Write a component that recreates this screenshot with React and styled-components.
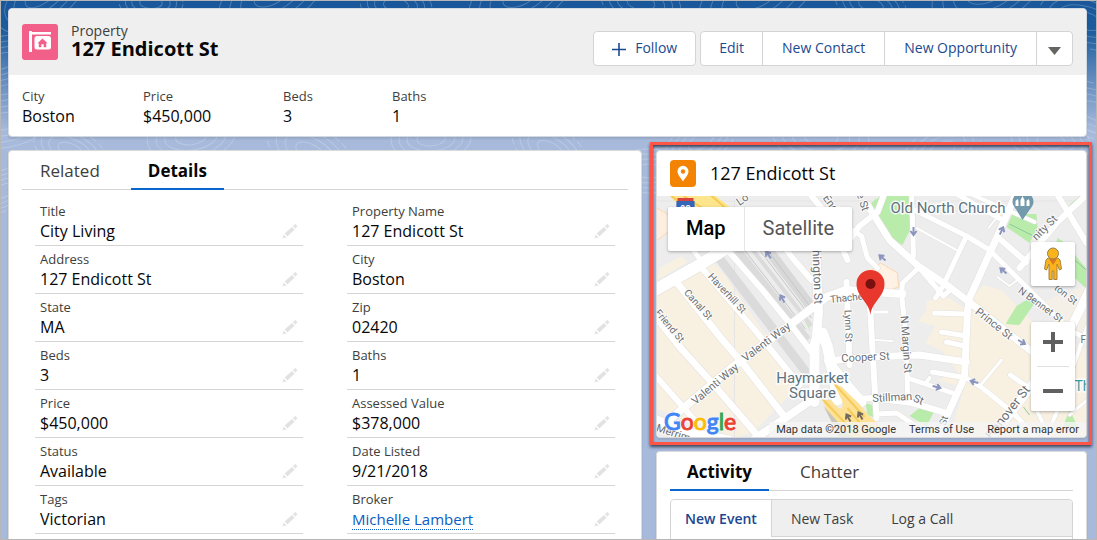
import React from "react";
import styled, { createGlobalStyle, css } from "styled-components";

const GlobalStyle = createGlobalStyle`
  *, *::before, *::after { box-sizing: border-box; }
  body {
    margin: 0;
    font-family: "Open Sans", "Noto Sans", sans-serif;
    font-size: 16px;
    line-height: 20px;
    color: #080707;
  }
  h1, h2, p, dl, dt, dd { margin: 0; font: inherit; }
  button { margin: 0; padding: 0; border: 0; background: none; font: inherit; color: inherit; cursor: pointer; }
`;

const Frame = styled.div`
  position: relative;
  isolation: isolate;
  height: 100vh;
  overflow: hidden;
  border: 1px solid #b7b7b7;
  padding: 7px 9px 0 7px;
  display: flex;
  flex-direction: column;
  gap: 13px;
  background: linear-gradient(#19579a 0, #1c5c9d 30px, #5f89bd 75px, #a7badb 130px);
`;

const Contours = styled.svg`
  position: absolute;
  inset: 0;
  width: 100%;
  height: 100%;
  z-index: -1;
`;

const Card = styled.section`
  position: relative;
  background: #fff;
  border: 1px solid #dddbda;
  border-radius: 4px;
  box-shadow: 0 2px 2px rgba(0, 0, 0, 0.1);
`;

const RecordCard = styled(Card)`
  border-color: #d3d9e3;
  flex: none;
`;

const RecordTop = styled.div`
  display: flex;
  align-items: center;
  gap: 13px;
  height: 66px;
  padding: 0 13px;
  background: #efefef;
  border-radius: 4px 4px 0 0;
`;

const ObjectIcon = styled.svg`
  display: block;
  width: 36px;
  height: 36px;
  flex: none;
`;

const Heading = styled.div`
  flex: 1;
  padding-bottom: 2px;
`;

const ObjectName = styled.p`
  font-size: 14px;
  line-height: 16px;
  color: #3e3e3c;
`;

const RecordName = styled.h1`
  font-size: 20px;
  line-height: 20px;
  font-weight: 700;
`;

const Actions = styled.div`
  display: flex;
  align-self: flex-start;
  gap: 4px;
  padding-top: 22px;
`;

const ButtonGroup = styled.div`
  display: flex;
  border: 1px solid #d4d4d4;
  border-radius: 4px;
  background: #fff;
`;

const ActionButton = styled.button`
  display: flex;
  align-items: center;
  gap: 9px;
  height: 33px;
  padding: 0 18px 2px;
  font-size: 14px;
  color: #1b4a8f;
  & + & { padding: 0 19px 2px; border-left: 1px solid #d4d4d4; }
  ${(p) => p.$icon && css`&& { padding: 2px 11px 0; }`}
`;

const Highlights = styled.dl`
  display: flex;
  padding: 12px 13px 9px;
`;

const Highlight = styled.div`
  width: ${(p) => p.$w}px;
`;

const Label = styled.dt`
  font-size: 13px;
  line-height: 18px;
  color: #3e3e3c;
`;

const Value = styled.dd`
  font-size: ${(p) => (p.$small ? 15 : 16)}px;
  line-height: 22px;
`;

const Columns = styled.main`
  display: grid;
  grid-template-columns: 634fr 431fr;
  column-gap: 14px;
  flex: 1;
`;

const Side = styled.div`
  display: flex;
  flex-direction: column;
  gap: 13px;
  min-width: 0;
`;

const TabBody = styled(Card)`
  padding: 0 13px;
  ${(p) => p.$grow && css`flex: 1; border-bottom: 0;`}
`;

const TabBar = styled.div`
  display: flex;
  gap: 13px;
  height: 39px;
  border-bottom: 1px solid #d4d4d4;
`;

const Tab = styled.button`
  height: 39px;
  padding: 2px 18px 0;
  font-size: 17px;
  color: #3e3e3c;
  border-bottom: 2px solid transparent;
  ${(p) => p.$active && css`
    padding: 2px 17px 0;
    font-weight: 700;
    color: #080707;
    border-color: #0a66cf;
  `}
`;

const FieldGrid = styled.dl`
  display: grid;
  grid-template-columns: 1fr 1fr;
  column-gap: 44px;
  padding: 8px 13px 0;
`;

const Field = styled.div`
  display: grid;
  grid-template-columns: 1fr auto;
  align-content: end;
  height: 48px;
  padding: 0 5px 3px;
  border-bottom: 1px solid #d4d4d4;
  ${Label} { grid-column: 1 / -1; }
`;

const EditButton = styled.button`
  width: 16px;
  height: 22px;
  display: grid;
  place-items: center;
`;

const RecordLink = styled.a`
  color: #0b5cc4;
  text-decoration: none;
  border-bottom: 1px dotted #0b5cc4;
`;

const MapHeader = styled.header`
  display: flex;
  align-items: center;
  gap: 14px;
  height: 45px;
  padding: 0 13px;
`;

const MapTitle = styled.h2`
  padding-bottom: 2px;
  font-size: 18px;
  line-height: 24px;
`;

const MapArea = styled.div`
  position: relative;
  height: 241px;
  overflow: hidden;
  border-radius: 0 0 4px 4px;
  font-family: Roboto, sans-serif;
`;

const MapDrawing = styled.svg`
  display: block;
  width: 100%;
  height: 100%;
`;

const Floating = styled.div`
  position: absolute;
  background: #fff;
  border-radius: 2px;
  box-shadow: 0 1px 3px rgba(0, 0, 0, 0.3);
`;

const MapTypes = styled(Floating)`
  top: 11px;
  left: 11px;
  display: flex;
`;

const MapType = styled.button`
  height: 44px;
  padding: 0 18px 2px;
  font-size: 20px;
  color: #565656;
  & + & { border-left: 1px solid #e6e6e6; }
  ${(p) => p.$active && css`color: #000; font-weight: 500;`}
`;

const Pegman = styled(Floating)`
  top: 46px;
  right: 11px;
`;

const Zoom = styled(Floating)`
  top: 126px;
  right: 11px;
`;

const MapButton = styled.button`
  width: 44px;
  height: 44px;
  display: grid;
  place-items: center;
`;

const ZoomLine = styled.div`
  height: 1px;
  margin: 0 6px;
  background: #e0e0e0;
`;

const GoogleMark = styled.a`
  position: absolute;
  left: 7px;
  bottom: 1px;
  font-family: Lato, sans-serif;
  font-size: 23px;
  line-height: 30px;
  font-weight: 400;
  -webkit-text-stroke: 1px currentColor;
  text-decoration: none;
  text-shadow: 0 0 2px #fff, 0 0 2px #fff, 0 0 3px #fff;
`;

const Letter = styled.span`
  color: ${(p) => p.$c};
`;

const MapLegal = styled.div`
  position: absolute;
  right: 0;
  bottom: 0;
  display: flex;
  gap: 13px;
  padding: 0 7px;
  font-size: 11px;
  line-height: 15px;
  color: #333;
  background: rgba(245, 245, 245, 0.8);
  a { color: inherit; text-decoration: none; }
`;

const Callout = styled.div`
  position: absolute;
  inset: -9px -6px -8px -7px;
  border: 3px solid #fd5547;
  box-shadow: 0 2px 3px rgba(20, 30, 50, 0.75), inset 0 2px 3px rgba(20, 30, 50, 0.75);
  pointer-events: none;
`;

const Composer = styled.div`
  display: flex;
  margin-top: 8px;
  height: 60px;
  border: 1px solid #d4d4d4;
  border-radius: 4px;
`;

const ComposerTabs = styled.div`
  flex: 1;
  display: flex;
  height: 37px;
  background: #efefef;
  border-bottom: 1px solid #d4d4d4;
  border-radius: 4px 4px 0 0;
`;

const ComposerTab = styled.button`
  height: 37px;
  padding: 0 19px;
  font-size: 14px;
  color: #3e3e3c;
  ${(p) => p.$active && css`
    padding: 0 14px;
    font-weight: 600;
    color: #1b468f;
    background: #fff;
    border-right: 1px solid #d4d4d4;
    border-radius: 4px 0 0 0;
  `}
`;

const swirls = [
  [40, -6, 26], [150, 2, 16], [272, -8, 30], [395, 4, 18], [520, -6, 28], [640, 2, 20],
  [755, -4, 30], [870, 4, 18], [985, -8, 28], [1085, 20, 24], [1, 60, 22], [1094, 110, 24],
  [4, 120, 24], [70, 150, 20], [190, 136, 22], [310, 152, 24], [430, 138, 20], [550, 150, 22],
  [648, 170, 20], [700, 140, 20], [820, 136, 24], [940, 150, 22], [1050, 140, 20], [2, 190, 18],
];

function Background() {
  return (
    <Contours aria-hidden="true" fill="none" stroke="#fff" strokeOpacity="0.22">
      {swirls.map(([x, y, r], i) => (
        <g key={i} transform={`translate(${x} ${y}) rotate(${(i * 37) % 70 - 35})`}>
          <ellipse rx={r * 2} ry={r * 1.1} strokeDasharray={i % 2 ? "7 3" : undefined} />
          <ellipse rx={r * 1.6} ry={r * 0.85} />
          <ellipse rx={r * 1.2} ry={r * 0.6} />
          <ellipse rx={r * 0.7} ry={r * 0.35} />
        </g>
      ))}
    </Contours>
  );
}

const Pencil = () => (
  <svg width="16" height="16" viewBox="0 0 16 16" fill="#e4e2e0" aria-hidden="true">
    <path d="M.500 15.500l1-4 3 3zM2.600 10.400l7.400-6.400 2.600 2.600-7.200 6.800zM11 3l1.400-1.500q.9-.7 1.800.2l.5.5q.9.9.1 1.800L13.400 5.500z" />
  </svg>
);

const roads = [
  [12, "645,296 700,265 735,243"],
  [7, "677,282 723,340 743,363 786,418"],
  [5, "690,245 704,264"],
  [6, "704,270 757,332 800,385"],
  [7, "650,309 682,349 710,380 762,440"],
  [6, "650,369 695,420"],
  [8, "672,418 733,367 793,323 827,297 846,290 903,294"],
  [6, "728,250 763,290 790,323 812,352"],
  [6, "778,238 793,258 812,280"],
  [9, "816,240 819,313 817,335"],
  [10, "819,333 815,345 815,402"],
  [11, "823,333 828,347 834,375 838,400"],
  [10, "831,365 845,382 862,402"],
  [9, "650,417 690,433 730,440"],
  [8, "745,446 815,398"],
  [6, "812,196 828,215 848,260"],
  [6, "850,240 860,226 878,212 884,196"],
  [5, "846,226 862,236 868,258 878,268"],
  [6, "847,282 850,365"],
  [7, "868,205 890,240 920,267 950,287 980,310 1034,353"],
  [5, "912,190 914,256"],
  [5, "915,210 967,236 990,250 1010,270 1070,330 1090,340"],
  [2, "917,228 957,250"],
  [5, "967,236 943,287 936,298"],
  [7, "1018,190 1007,216 970,298 968,310 965,377 947,417 938,440"],
  [5, "950,190 1003,220"],
  [4, "962,190 1035,222"],
  [6, "998,237 1027,262"],
  [6, "1020,268 1058,222 1090,192"],
  [6, "1055,190 1087,243"],
  [2, "998,277 1010,286 1018,280"],
  [2, "1000,214 989,228"],
  [5, "920,267 903,283 902,294 907,340 908,398"],
  [5, "920,268 944,296 953,288"],
  [5, "935,313 966,314"],
  [5, "942,332 967,336"],
  [5, "947,342 965,346"],
  [7, "828,361 870,357 920,355 967,362"],
  [6, "870,296 873,350 877,418"],
  [3, "872,312 888,312"],
  [2, "876,340 893,341"],
  [5, "908,378 953,393"],
  [4, "926,384 930,378"],
  [5, "933,372 967,378 983,388 1015,414 1035,437"],
  [3, "982,384 1002,360"],
  [5, "1011,375 1035,392"],
  [6, "858,399 873,398 913,403 947,413"],
  [5, "877,414 897,413 915,425"],
  [9, "985,446 1015,408 1040,375 1068,335 1090,290"],
  [4, "1038,412 1050,437"],
  [4, "1046,440 1062,400 1090,320"],
  [3, "1070,415 1090,398"],
];

const labels = [
  ["Haverhill St", 708, 277, 47, 10],
  ["Canal St", 684, 293, 48, 10],
  ["Friend St", 655, 313, 50, 10],
  ["Valenti Way", 746, 362, -37, 11],
  ["Valenti Way", 696, 405, -40, 11],
  ["hington St", 813, 250, 88, 12],
  ["Thacher", 831, 303, -6, 10],
  ["Lynn St", 845, 310, 88, 10],
  ["Cooper St", 842, 362, -3, 11],
  ["N Margin St", 901, 316, 86, 11],
  ["Stillman", 873, 402, -3, 11],
  ["St", 913, 401, 22, 11],
  ["Prince St", 975, 313, 38, 11],
  ["N Bennet St", 1018, 292, 36, 10],
  ["ton St", 1054, 289, 38, 10],
  ["nity St", 1037, 241, -45, 11],
  ["Hanover St", 992, 440, -52, 13],
  ["St", 946, 426, -72, 10],
  ["Merrimac", 656, 431, 18, 11],
  ["End", 823, 198, 55, 11],
  ["e St", 857, 194, 72, 11],
  ["Lo", 740, 206, -35, 11],
  ["F", 1081, 343, 0, 10],
];

const arrows = [
  [769, 255, -35], [783, 299, -30], [914, 231, 180], [883, 258, -50], [1002, 231, 25],
  [1004, 271, -50], [1022, 342, 120], [937, 387, 105], [975, 382, -75],
];

function CityMap() {
  return (
    <MapDrawing viewBox="657 196 430 241" preserveAspectRatio="xMidYMid slice" role="img" aria-label="Map of 127 Endicott St">
      <rect x="400" y="0" width="1000" height="600" fill="#eeeded" />
      <g fill="#f8f1e2">
        <path d="M657 297L710 258 725 275 800 385 752 434 735 437 680 417 657 409z" />
        <path d="M660 268l22-12 6 6-30 18z" />
        <path d="M970 298l14-13 18 5 35 36 50 24v87H950l15-50z" />
        <path d="M927 301l20-5 18 12v80l-27-8 20-8-14-20-18-9 10-17-18-5 9-10z" />
        <path d="M1035 305l52 30v-50z" opacity=".6" />
      </g>
      <path d="M735 196v241M657 201h430" stroke="#e6e5e5" />
      <path d="M650 204l18 10 6 14-16 12-8 4z" fill="#feeee0" stroke="#fbd6b2" />
      <path d="M872 270l9-7 17 10 1 14-20 7z" fill="#fff1e3" stroke="#fbd6b2" />
      <g fill="#b9ebab">
        <path d="M872 204l11-10h29v33l-9 18-15-8z" />
        <path d="M1013 214h24l1 14-8 15-23-16z" />
        <path d="M1058 238l8 5 21 26v20l-34-32z" />
        <path d="M1070 205l17-15v8l-12 10z" />
        <path d="M1006 324l11-18 10-6 9 2-16 23z" />
        <path d="M910 416l10-8 15 3-8 15z" />
        <path d="M1062 430l8-20 10 20z" />
        <path d="M803 316l4 2 4 14z" />
        <path d="M866 403l10 3v12l-8-3z" />
        <path d="M871 204l6-6v14z" />
      </g>
      <g stroke="#dbdbdb" fill="none">
        <path d="M718 256L808 374" strokeWidth="9" />
        <path d="M738 250L808 340" strokeWidth="8" />
        <path d="M751 247L812 326" strokeWidth="4" />
        <path d="M765 245L814 310" strokeWidth="10" stroke="#d8d8d8" />
        <path d="M764 245L814 311M745 250L806 329M757 246L812 318" strokeWidth="1" stroke="#c6c6c6" />
      </g>
      <g fill="none" stroke="#e2e0dd" strokeLinecap="round" strokeLinejoin="round">
        {roads.map(([w, pts], i) => <polyline key={i} points={pts} strokeWidth={w + 1} />)}
      </g>
      <g fill="none" stroke="#fff" strokeLinecap="round" strokeLinejoin="round">
        {roads.map(([w, pts], i) => <polyline key={i} points={pts} strokeWidth={w} />)}
      </g>
      <path d="M664 190L688 214 724 236 740 214 708 190z" fill="#fde58d" />
      <path d="M672 196l20 16M684 196l22 14M710 194l16 14" stroke="#f6ca56" strokeWidth="2" />
      <path d="M823 400l8 0 8 8q5 2 4-6l-9-19 8 4 18 17 8 10 12 12 6 14h-46z" fill="#fde194" />
      <path d="M835 384l30 33M823 399l34 36M848 408l24 29" stroke="#f6cb5c" strokeWidth="2" fill="none" />
      <path d="M824 406l28 31h-12z" fill="#c9c5bb" />
      <path d="M1010 224l24 12M1056 244l31 26M1030 415l-6-8" stroke="#8fc79f" fill="none" />
      <g fill="none" stroke="#73695a" strokeWidth="2">
        <path d="M0 4V-3M-3 0L0-4 3 0" transform="translate(849 418) rotate(-30)" />
        <path d="M0 4V-3M-3 0L0-4 3 0" transform="translate(861 416) rotate(-30)" />
      </g>
      <path d="M678 198h16v3h-16z" fill="#d9413d" />
      <path d="M677 201h18q2 10-9 17-11-7-9-17z" fill="#3566b8" />
      <text x="686" y="212" fontSize="9" fontWeight="700" fill="#fff" textAnchor="middle">93</text>
      <g fill="none" stroke="#8b95bd" strokeWidth="2">
        {arrows.map(([x, y, a], i) => (
          <path key={i} d="M0 4V-3M-3 0L0-4 3 0" transform={`translate(${x} ${y}) rotate(${a})`} />
        ))}
      </g>
      <g fill="#6c7074" stroke="#fff" strokeWidth="2" paintOrder="stroke" strokeOpacity=".8">
        {labels.map(([t, x, y, a, s], i) => (
          <text key={i} fontSize={s} transform={`translate(${x} ${y}) rotate(${a})`}>{t}</text>
        ))}
      </g>
      <g fill="#5d7380" stroke="#fff" strokeWidth="3" paintOrder="stroke" strokeOpacity=".85">
        <text x="891" y="213" fontSize="15">Old North Church</text>
        <text x="813" y="383" fontSize="15" textAnchor="middle">Haymarket</text>
        <text x="813" y="398" fontSize="15" textAnchor="middle">Square</text>
        <text x="1075" y="391" fontSize="14" fill="#3f9a9e">Th</text>
      </g>
      <path d="M1023 220l-6-10q-4-5-4-8a10.500 10.500 0 0 1 21 0q0 3-4 8z" fill="#7399ac" />
      <path d="M1016 206v-5l2-2 1 2v5zM1021 206v-6l2-4 2 4v6zM1027 206v-5l2-2 1 2v5z" fill="#fff" />
      <path d="M871 315c-1-13-14-18-14-31a14 14 0 0 1 28 0c0 13-13 18-14 31z" fill="#e8372d" />
      <circle cx="871" cy="284" r="5" fill="#76110f" />
    </MapDrawing>
  );
}

const highlights = [["City", "Boston", 121], ["Price", "$450,000", 140], ["Beds", "3", 109], ["Baths", "1", 100]];

const fields = [
  ["Title", "City Living"], ["Property Name", "127 Endicott St"],
  ["Address", "127 Endicott St"], ["City", "Boston"],
  ["State", "MA"], ["Zip", "02420"],
  ["Beds", "3"], ["Baths", "1"],
  ["Price", "$450,000"], ["Assessed Value", "$378,000"],
  ["Status", "Available"], ["Date Listed", "9/21/2018"],
  ["Tags", "Victorian"], ["Broker", "Michelle Lambert", true],
];

const googleLetters = [["G", "#4285f4"], ["o", "#ea4335"], ["o", "#fbbc05"], ["g", "#4285f4"], ["l", "#34a853"], ["e", "#ea4335"]];

export default function App() {
  return (
    <>
      <GlobalStyle />
      <Frame>
        <Background />
        <RecordCard>
          <RecordTop>
            <ObjectIcon viewBox="0 0 36 36" aria-hidden="true">
              <rect width="36" height="36" rx="3" fill="#f25f88" />
              <path d="M7 7.500q0-.5.500-.5h1.800q.7 0 .7.700V8h19v2.500H10V28H7zM15 12h11.500q2.500 0 2.500 2.500V23q0 2.500-2.500 2.500H15q-2.500 0-2.500-2.500v-8.500Q12.500 12 15 12z" fill="#fff" />
              <path d="M20.500 14.500l5 4.700h-1.300v4h-2.500v-3h-2.400v3h-2.500v-4h-1.300z" fill="#f25f88" />
            </ObjectIcon>
            <Heading>
              <ObjectName>Property</ObjectName>
              <RecordName>127 Endicott St</RecordName>
            </Heading>
            <Actions>
              <ButtonGroup>
                <ActionButton>
                  <svg width="14" height="16" viewBox="0 0 14 16" stroke="#1b4a8f" strokeWidth="1.600" aria-hidden="true">
                    <path d="M7 3v13M0 9.500h14" />
                  </svg>
                  Follow
                </ActionButton>
              </ButtonGroup>
              <ButtonGroup>
                <ActionButton>Edit</ActionButton>
                <ActionButton>New Contact</ActionButton>
                <ActionButton>New Opportunity</ActionButton>
                <ActionButton $icon aria-label="More actions">
                  <svg width="13" height="13" viewBox="0 0 13 13" aria-hidden="true">
                    <path d="M0 4h13l-6.500 8z" fill="#666460" />
                  </svg>
                </ActionButton>
              </ButtonGroup>
            </Actions>
          </RecordTop>
          <Highlights>
            {highlights.map(([label, value, w]) => (
              <Highlight key={label} $w={w}>
                <Label>{label}</Label>
                <Value>{value}</Value>
              </Highlight>
            ))}
          </Highlights>
        </RecordCard>

        <Columns>
          <TabBody>
            <TabBar role="tablist">
              <Tab role="tab">Related</Tab>
              <Tab role="tab" aria-selected="true" $active>Details</Tab>
            </TabBar>
            <FieldGrid>
              {fields.map(([label, value, link]) => (
                <Field key={label}>
                  <Label>{label}</Label>
                  <Value $small={link}>{link ? <RecordLink href="#broker">{value}</RecordLink> : value}</Value>
                  <EditButton aria-label={`Edit ${label}`}><Pencil /></EditButton>
                </Field>
              ))}
            </FieldGrid>
          </TabBody>

          <Side>
            <Card>
              <MapHeader>
                <svg width="26" height="27" viewBox="0 0 26 27" aria-hidden="true">
                  <rect width="26" height="27" rx="4" fill="#f38303" />
                  <path d="M13 21.500c-1-2.500-5.500-6-5.500-10.200a5.500 5.500 0 0 1 11 0c0 4.200-4.500 7.700-5.500 10.200z" fill="#fff" />
                  <circle cx="13" cy="11.500" r="2.200" fill="#f38303" />
                </svg>
                <MapTitle>127 Endicott St</MapTitle>
              </MapHeader>
              <MapArea>
                <CityMap />
                <MapTypes>
                  <MapType $active>Map</MapType>
                  <MapType>Satellite</MapType>
                </MapTypes>
                <Pegman>
                  <MapButton aria-label="Street View">
                    <svg width="20" height="34" viewBox="0 0 20 34" aria-hidden="true">
                      <path d="M5 11h10l2 2 1.500 9-2 1-2.500-6v15.500h-3.200V24H9.200v8.500H6V17l-2.500 6-2-1L3 13z" fill="#fbb31c" stroke="#a8843c" />
                      <path d="M6 12h8l-4 6z" fill="#dd7a20" />
                      <circle cx="10" cy="6.500" r="5.500" fill="#fbb31c" stroke="#8f8054" />
                    </svg>
                  </MapButton>
                </Pegman>
                <Zoom>
                  <MapButton aria-label="Zoom in">
                    <svg width="20" height="24" viewBox="0 0 20 24" fill="#606060" aria-hidden="true">
                      <path d="M8 0h4v8h8v4h-8v8H8v-8H0V8h8z" />
                    </svg>
                  </MapButton>
                  <ZoomLine />
                  <MapButton aria-label="Zoom out">
                    <svg width="20" height="20" viewBox="0 0 20 20" fill="#606060" aria-hidden="true">
                      <path d="M0 10h20v4H0z" />
                    </svg>
                  </MapButton>
                </Zoom>
                <GoogleMark href="#google">
                  {googleLetters.map(([l, c], i) => <Letter key={i} $c={c}>{l}</Letter>)}
                </GoogleMark>
                <MapLegal>
                  <span>Map data ©2018 Google</span>
                  <a href="#terms">Terms of Use</a>
                  <a href="#report">Report a map error</a>
                </MapLegal>
              </MapArea>
              <Callout />
            </Card>

            <TabBody $grow>
              <TabBar role="tablist">
                <Tab role="tab" aria-selected="true" $active>Activity</Tab>
                <Tab role="tab">Chatter</Tab>
              </TabBar>
              <Composer>
                <ComposerTabs role="tablist">
                  <ComposerTab role="tab" aria-selected="true" $active>New Event</ComposerTab>
                  <ComposerTab role="tab">New Task</ComposerTab>
                  <ComposerTab role="tab">Log a Call</ComposerTab>
                </ComposerTabs>
              </Composer>
            </TabBody>
          </Side>
        </Columns>
      </Frame>
    </>
  );
}
